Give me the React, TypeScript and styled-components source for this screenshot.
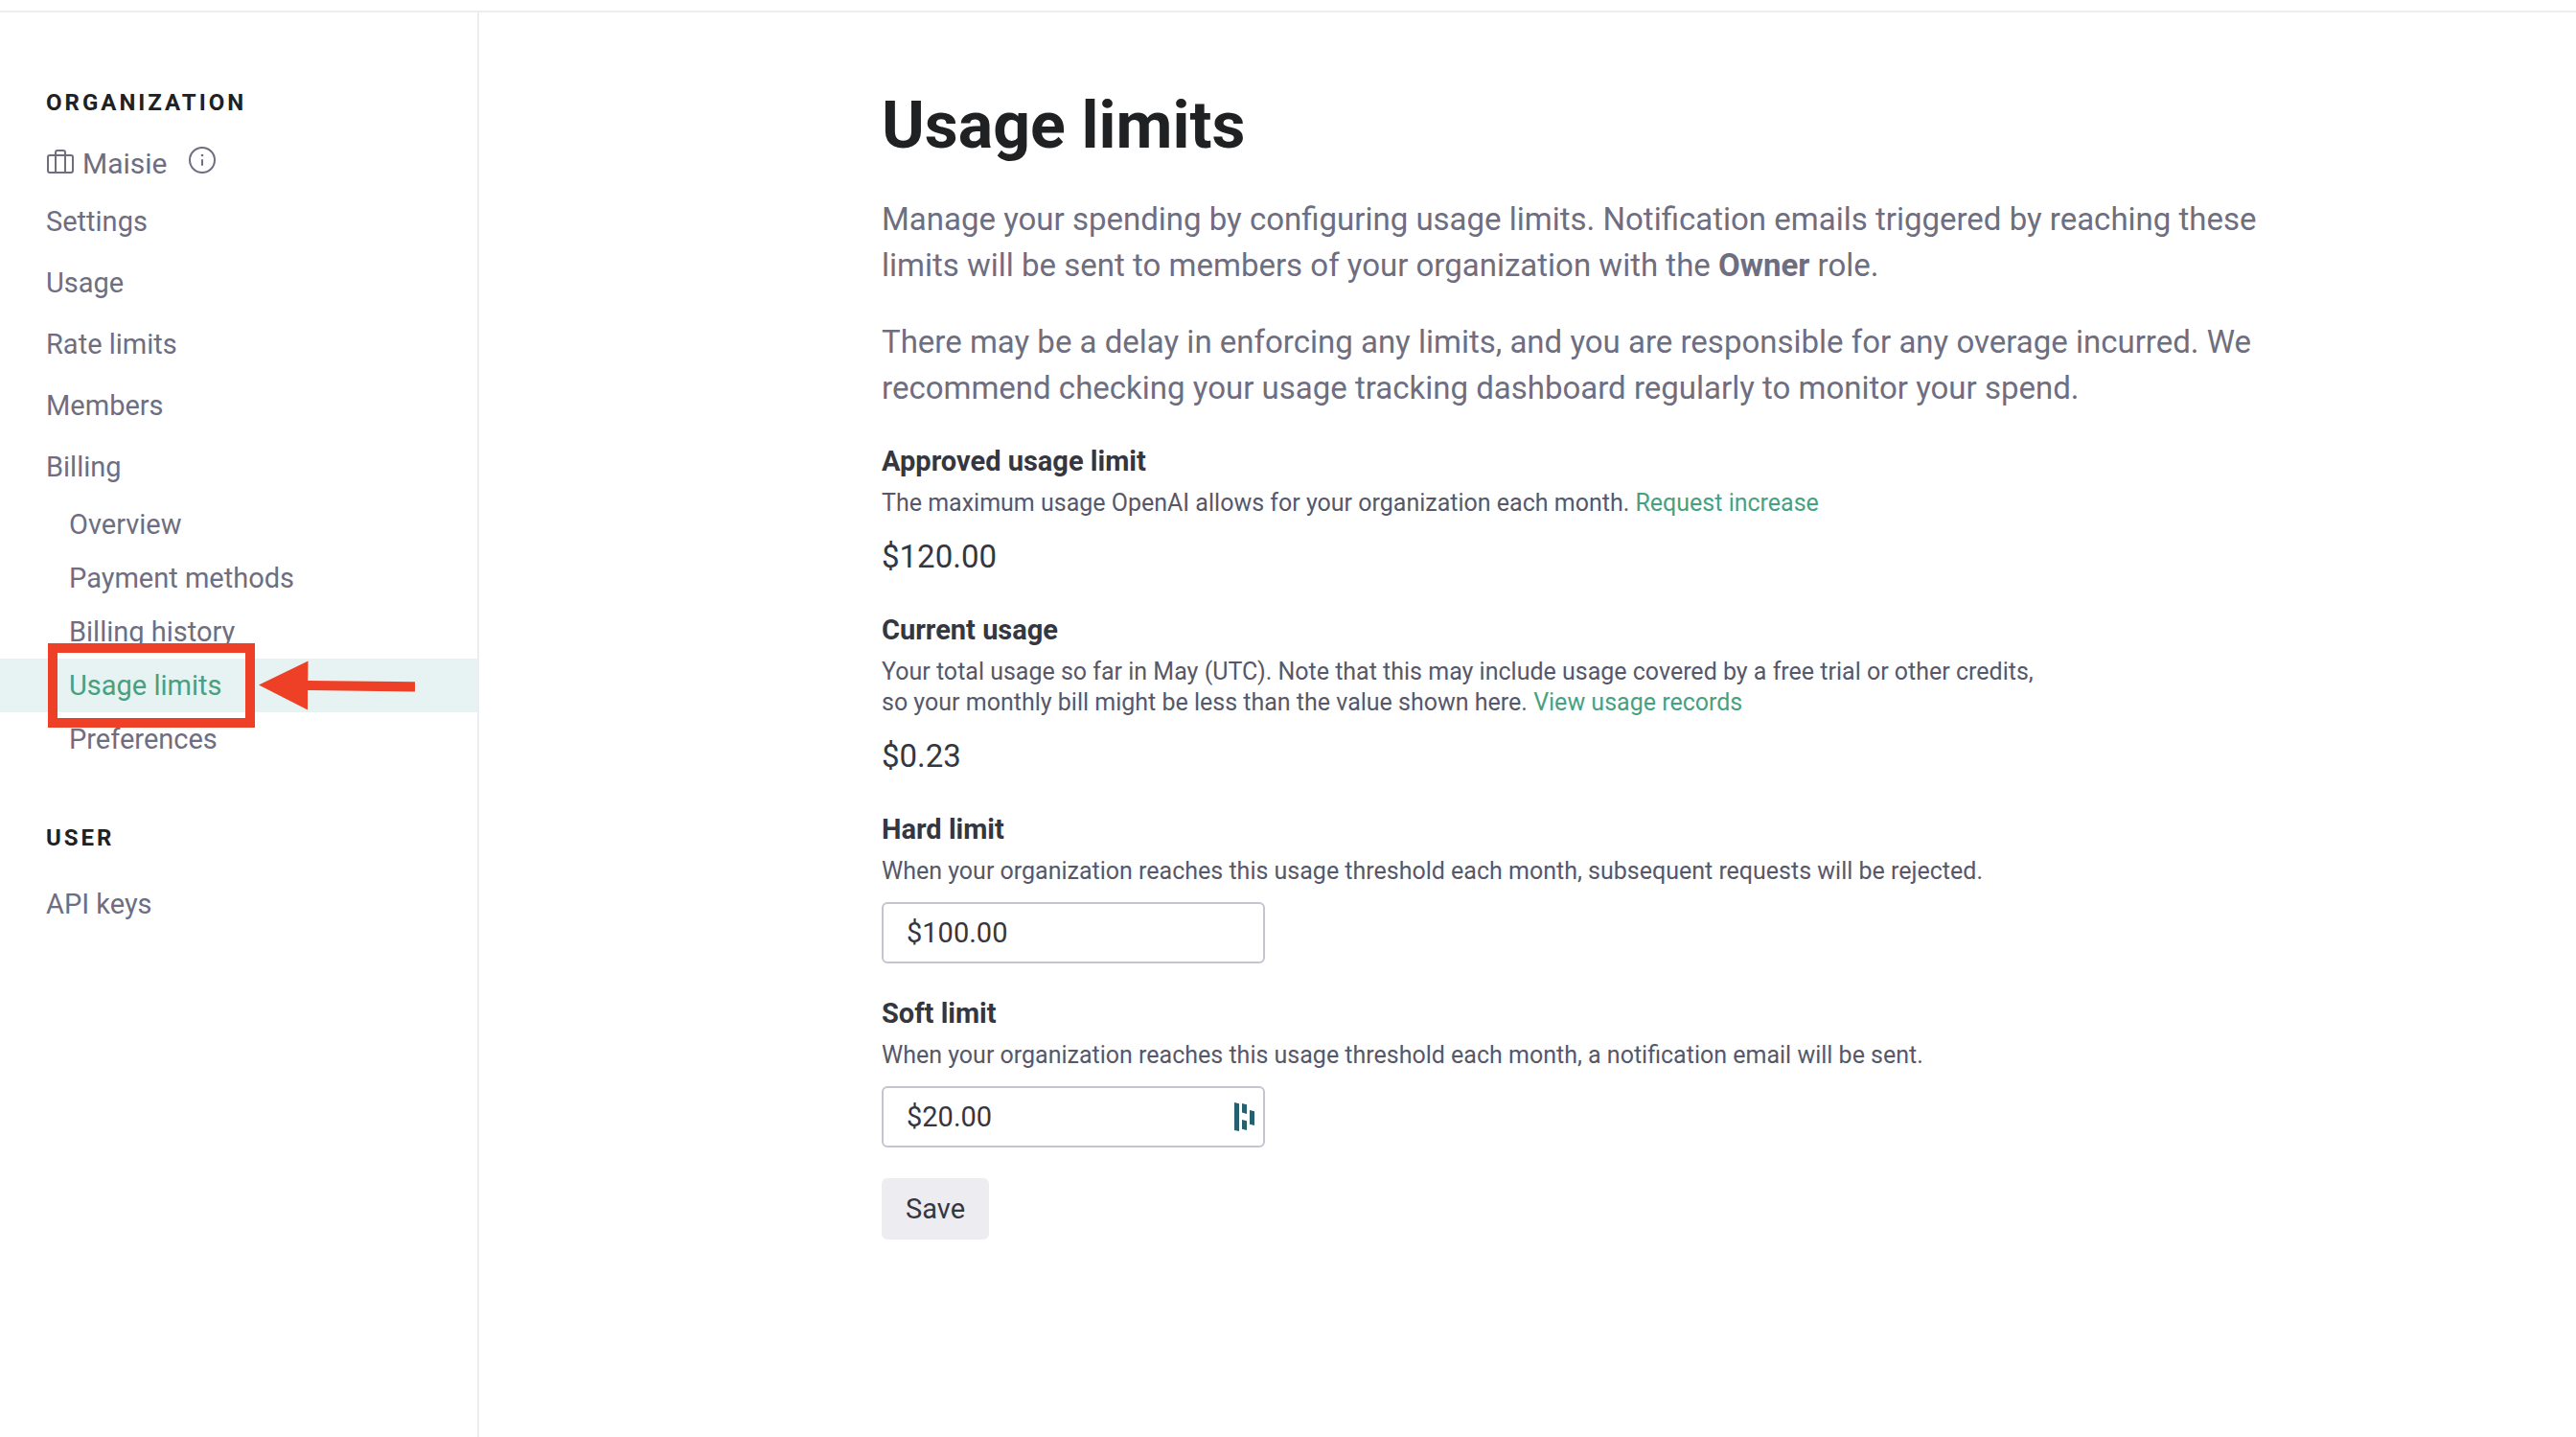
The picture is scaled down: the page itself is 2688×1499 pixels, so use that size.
import React from "react";
import styled, { createGlobalStyle, css } from "styled-components";

const GlobalStyle = createGlobalStyle`
  *, *::before, *::after { box-sizing: border-box; }
  body {
    margin: 0;
    background: #ffffff;
    color: #353740;
    font-family: Roboto, "Liberation Sans", sans-serif;
    font-size: 29px;
    line-height: 40px;
  }
  h1, h2, h3, p, ul { margin: 0; padding: 0; }
  ul { list-style: none; }
  a { text-decoration: none; }
`;

const Page = styled.div`
  display: flex;
  flex-direction: column;
  min-height: 100vh;
`;

const TopBar = styled.header`
  height: 13px;
  border-bottom: 2px solid #ececf1;
`;

const Body = styled.div`
  display: flex;
  flex: 1;
`;

const Sidebar = styled.nav`
  flex: 0 0 500px;
  border-right: 2px solid #ececf1;
  padding-top: 75px;
`;

const SidebarHeading = styled.h2`
  padding: 0 48px;
  color: #202123;
  font-size: 24px;
  font-weight: 700;
  letter-spacing: 3px;
  line-height: 38px;
  text-transform: uppercase;
`;

const Account = styled.div`
  display: flex;
  align-items: baseline;
  gap: 8px;
  margin: 25px 0 8px;
  padding: 0 48px;
  color: #6e6e80;
  font-size: 30px;
`;

const InfoButton = styled.button`
  display: flex;
  margin-left: 14px;
  padding: 0;
  border: 0;
  background: none;
  color: inherit;
`;

const NavList = styled.ul<{ $spaced?: boolean }>`
  margin-bottom: 56px;
  ${(p) => p.$spaced && css`margin-top: 18px;`}
`;

const navText = css`
  display: block;
  color: #6e6e80;
`;

const NavLink = styled.a`
  ${navText}
  padding: 12px 48px;
`;

const SubItem = styled.li`
  position: relative;
`;

const SubLink = styled.a<{ $active?: boolean }>`
  ${navText}
  padding: 8px 72px;
  ${(p) => p.$active && css`
    background: #e7f3f3;
    color: #47a181;
  `}
`;

const Highlight = styled.span`
  position: absolute;
  z-index: 1;
  top: -16px;
  left: 50px;
  width: 216px;
  height: 88px;
  border: 10px solid #ee4026;
  pointer-events: none;
`;

const Pointer = styled.span`
  position: absolute;
  z-index: 1;
  top: 2px;
  left: 270px;
  pointer-events: none;
  line-height: 0;
`;

const Main = styled.main`
  display: grid;
  flex: 1;
  grid-template-columns: minmax(48px, 420px) minmax(0, 1480px) 1fr;
  padding: 76px 0;
`;

const Content = styled.div`
  grid-column: 2;
`;

const Title = styled.h1`
  color: #202123;
  font-size: 68px;
  font-weight: 700;
  line-height: 84px;
  margin-bottom: 32px;
`;

const Intro = styled.p`
  color: #6e6e80;
  font-size: 33px;
  line-height: 48px;
  margin-bottom: 32px;
`;

const Form = styled.form`
  display: flex;
  flex-direction: column;
  align-items: flex-start;
  gap: 32px;
`;

const Section = styled.section`
  max-width: 1216px;
`;

const sectionTitle = css`
  display: block;
  font-size: 29px;
  font-weight: 700;
  line-height: 40px;
`;

const SectionTitle = styled.h3`${sectionTitle}`;
const FieldLabel = styled.label`${sectionTitle}`;

const Description = styled.p`
  margin: 8px 0 16px;
  color: #565869;
  font-size: 25px;
  line-height: 32px;
`;

const TextLink = styled.a`
  color: #47a181;
`;

const Amount = styled.p`
  font-size: 33px;
  line-height: 48px;
`;

const Field = styled.div`
  position: relative;
  width: 400px;
  max-width: 100%;
`;

const TextInput = styled.input`
  display: block;
  width: 100%;
  height: 64px;
  padding: 0 24px;
  border: 2px solid #c5c5d2;
  border-radius: 6px;
  background: #ffffff;
  color: #353740;
  font: inherit;
`;

const FieldBadge = styled.span`
  position: absolute;
  top: 17px;
  right: 11px;
  line-height: 0;
`;

const SaveButton = styled.button`
  height: 64px;
  padding: 0 25px;
  border: 0;
  border-radius: 6px;
  background: #ececf1;
  color: #353740;
  font: inherit;
`;

function BriefcaseIcon() {
  return (
    <svg width="30" height="28" viewBox="0 0 30 28" fill="none" stroke="currentColor" strokeWidth="2" strokeLinejoin="round" aria-hidden="true">
      <rect x="2" y="9" width="26" height="18" rx="2" />
      <path d="M10 27V6a2 2 0 0 1 2-2h6a2 2 0 0 1 2 2v21" />
    </svg>
  );
}

function InfoIcon() {
  return (
    <svg width="28" height="28" viewBox="0 0 28 28" fill="none" stroke="currentColor" strokeWidth="2" strokeLinecap="round" aria-hidden="true">
      <circle cx="14" cy="14" r="13" />
      <path d="M14 14v5" />
      <circle cx="14" cy="9" r="1.3" fill="currentColor" stroke="none" />
    </svg>
  );
}

function ArrowIcon() {
  return (
    <svg width="164" height="52" viewBox="0 0 164 52" fill="#ee4026" aria-hidden="true">
      <path d="M0 25.500L51.500 0.500L51.200 21L163 22.200V32.600L51 31V51.500Z" />
    </svg>
  );
}

function PasswordManagerIcon() {
  return (
    <svg width="21" height="30" viewBox="0 0 21 30" fill="#26606f" aria-hidden="true">
      <path d="M0 0L5 1.300V30L0 29Z" />
      <path d="M8 1L13 2.300V12L8 10.500Z" />
      <path d="M8 18L13 19.300V29L8 27.700Z" />
      <path d="M16 8L21 9.300V24L16 22.800Z" />
    </svg>
  );
}

const navItems = ["Settings", "Usage", "Rate limits", "Members", "Billing"];
const billingItems = ["Overview", "Payment methods", "Billing history", "Usage limits", "Preferences"];

export default function App() {
  return (
    <>
      <GlobalStyle />
      <Page>
        <TopBar />
        <Body>
          <Sidebar aria-label="Account">
            <SidebarHeading>Organization</SidebarHeading>
            <Account>
              <BriefcaseIcon />
              <span>Maisie</span>
              <InfoButton type="button" aria-label="About this organization">
                <InfoIcon />
              </InfoButton>
            </Account>
            <NavList>
              {navItems.map((item) => (
                <li key={item}>
                  <NavLink href="#">{item}</NavLink>
                </li>
              ))}
              {billingItems.map((item) => {
                const active = item === "Usage limits";
                return (
                  <SubItem key={item}>
                    <SubLink href="#" $active={active} aria-current={active ? "page" : undefined}>
                      {item}
                    </SubLink>
                    {active && (
                      <>
                        <Highlight />
                        <Pointer>
                          <ArrowIcon />
                        </Pointer>
                      </>
                    )}
                  </SubItem>
                );
              })}
            </NavList>
            <SidebarHeading>User</SidebarHeading>
            <NavList $spaced>
              <li>
                <NavLink href="#">API keys</NavLink>
              </li>
            </NavList>
          </Sidebar>
          <Main>
            <Content>
              <Title>Usage limits</Title>
              <Intro>
                Manage your spending by configuring usage limits. Notification emails triggered by reaching these limits will be
                sent to members of your organization with the <strong>Owner</strong> role.
              </Intro>
              <Intro>
                There may be a delay in enforcing any limits, and you are responsible for any overage incurred. We recommend
                checking your usage tracking dashboard regularly to monitor your spend.
              </Intro>
              <Form>
                <Section>
                  <SectionTitle>Approved usage limit</SectionTitle>
                  <Description>
                    The maximum usage OpenAI allows for your organization each month. <TextLink href="#">Request increase</TextLink>
                  </Description>
                  <Amount>$120.00</Amount>
                </Section>
                <Section>
                  <SectionTitle>Current usage</SectionTitle>
                  <Description>
                    Your total usage so far in May (UTC). Note that this may include usage covered by a free trial or other
                    credits, so your monthly bill might be less than the value shown here.{" "}
                    <TextLink href="#">View usage records</TextLink>
                  </Description>
                  <Amount>$0.23</Amount>
                </Section>
                <Section>
                  <FieldLabel htmlFor="hard-limit">Hard limit</FieldLabel>
                  <Description>
                    When your organization reaches this usage threshold each month, subsequent requests will be rejected.
                  </Description>
                  <Field>
                    <TextInput id="hard-limit" type="text" defaultValue="$100.00" />
                  </Field>
                </Section>
                <Section>
                  <FieldLabel htmlFor="soft-limit">Soft limit</FieldLabel>
                  <Description>
                    When your organization reaches this usage threshold each month, a notification email will be sent.
                  </Description>
                  <Field>
                    <TextInput id="soft-limit" type="text" defaultValue="$20.00" />
                    <FieldBadge>
                      <PasswordManagerIcon />
                    </FieldBadge>
                  </Field>
                </Section>
                <SaveButton type="button">Save</SaveButton>
              </Form>
            </Content>
          </Main>
        </Body>
      </Page>
    </>
  );
}
